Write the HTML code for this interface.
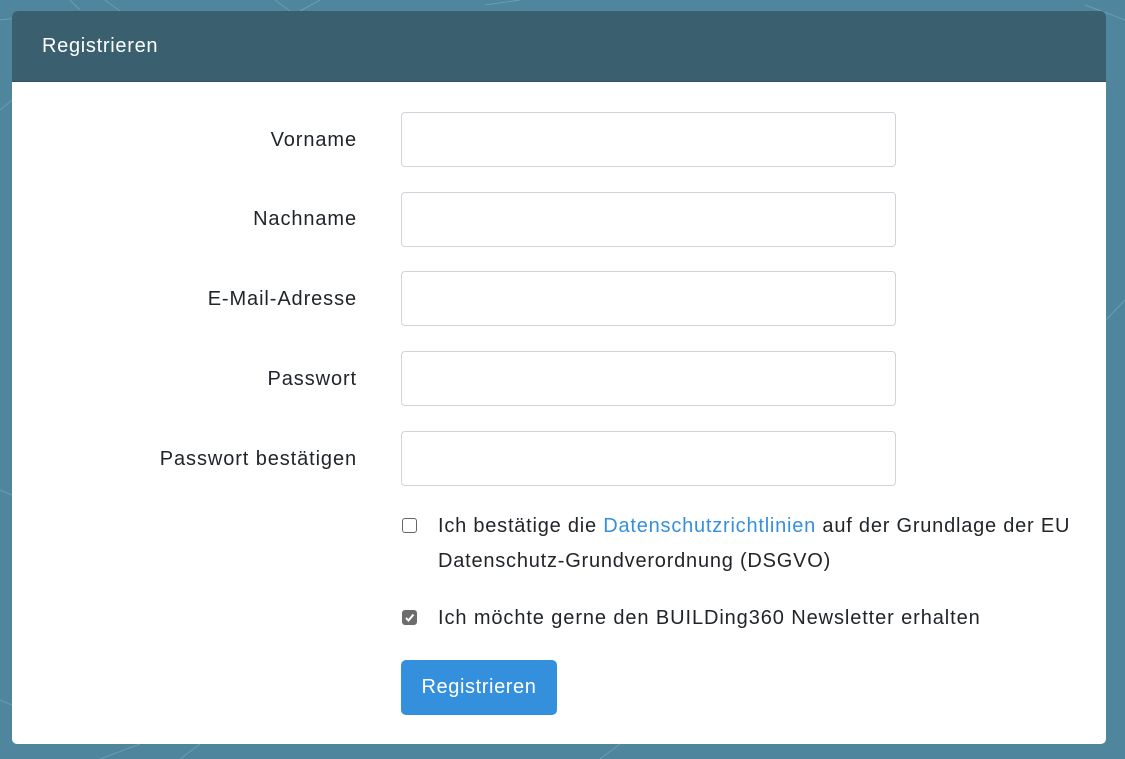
<!DOCTYPE html>
<html><head><style>
body{margin:0;width:1125px;height:759px;background:#4f859d;font-family:"Liberation Sans",sans-serif;overflow:hidden;position:relative;color:#212529;letter-spacing:0.9px}
.card{position:absolute;left:12px;top:11px;width:1094px;height:733px;background:#fff;border-radius:5px;overflow:hidden}
.hd{height:70px;background:#3a6070;color:#fff;font-size:20px;line-height:70px;padding-left:30px;border-bottom:1px solid #2f4f5c;letter-spacing:0.7px}
.lbl{position:absolute;right:749px;font-size:20px;text-align:right}
.in{position:absolute;left:389px;width:493px;height:53px;border:1px solid #ced4da;border-radius:4px}
.cb{position:absolute;left:390px;width:15px;height:15px;border:1px solid #666;border-radius:3px;box-sizing:border-box}
.t{position:absolute;left:426px;font-size:20px;line-height:35px}
a{color:#3490dc;text-decoration:none}
.btn{position:absolute;left:389px;top:649px;width:156px;height:55px;background:#3490dc;border-radius:5px;color:#fff;font-size:20px;line-height:55px;text-align:center;letter-spacing:0.6px}
</style></head><body>
<svg width="1125" height="759" style="position:absolute;left:0;top:0" stroke="#6a9db3" stroke-width="1" fill="none"><path d="M0 20 L40 15 M70 0 L80 10 M105 0 L120 11 M275 0 L290 11 M320 0 L300 11 M485 5 L520 0 M1085 5 L1125 20 M0 110 L12 100 M0 490 L12 495 M1106 320 L1125 300 M0 700 L12 705 M100 759 L140 744 M200 744 L180 759 M600 759 L620 744"/></svg>
<div class="card">
<div class="hd">Registrieren</div>
<div class="lbl" style="top:118px">Vorname</div>
<div class="in" style="top:101px"></div>
<div class="lbl" style="top:197px">Nachname</div>
<div class="in" style="top:181px"></div>
<div class="lbl" style="top:277px">E-Mail-Adresse</div>
<div class="in" style="top:260px"></div>
<div class="lbl" style="top:357px">Passwort</div>
<div class="in" style="top:340px"></div>
<div class="lbl" style="top:437px">Passwort bestätigen</div>
<div class="in" style="top:420px"></div>
<div class="cb" style="top:507px"></div>
<div class="t" style="top:498px;letter-spacing:0.78px">Ich bestätige die <a>Datenschutzrichtlinien</a> auf der Grundlage der EU<br>Datenschutz-Grundverordnung (DSGVO)</div>
<div class="cb" style="top:599px;background:#6c6c6c;border-color:#6c6c6c"><svg width="15" height="15" style="position:absolute;left:-1px;top:-1px"><path d="M4 8 L6.5 10.5 L11.5 4.5" stroke="#fff" stroke-width="2" fill="none"/></svg></div>
<div class="t" style="top:590px">Ich möchte gerne den BUILDing360 Newsletter erhalten</div>
<div class="btn">Registrieren</div>
</div>
</body></html>
